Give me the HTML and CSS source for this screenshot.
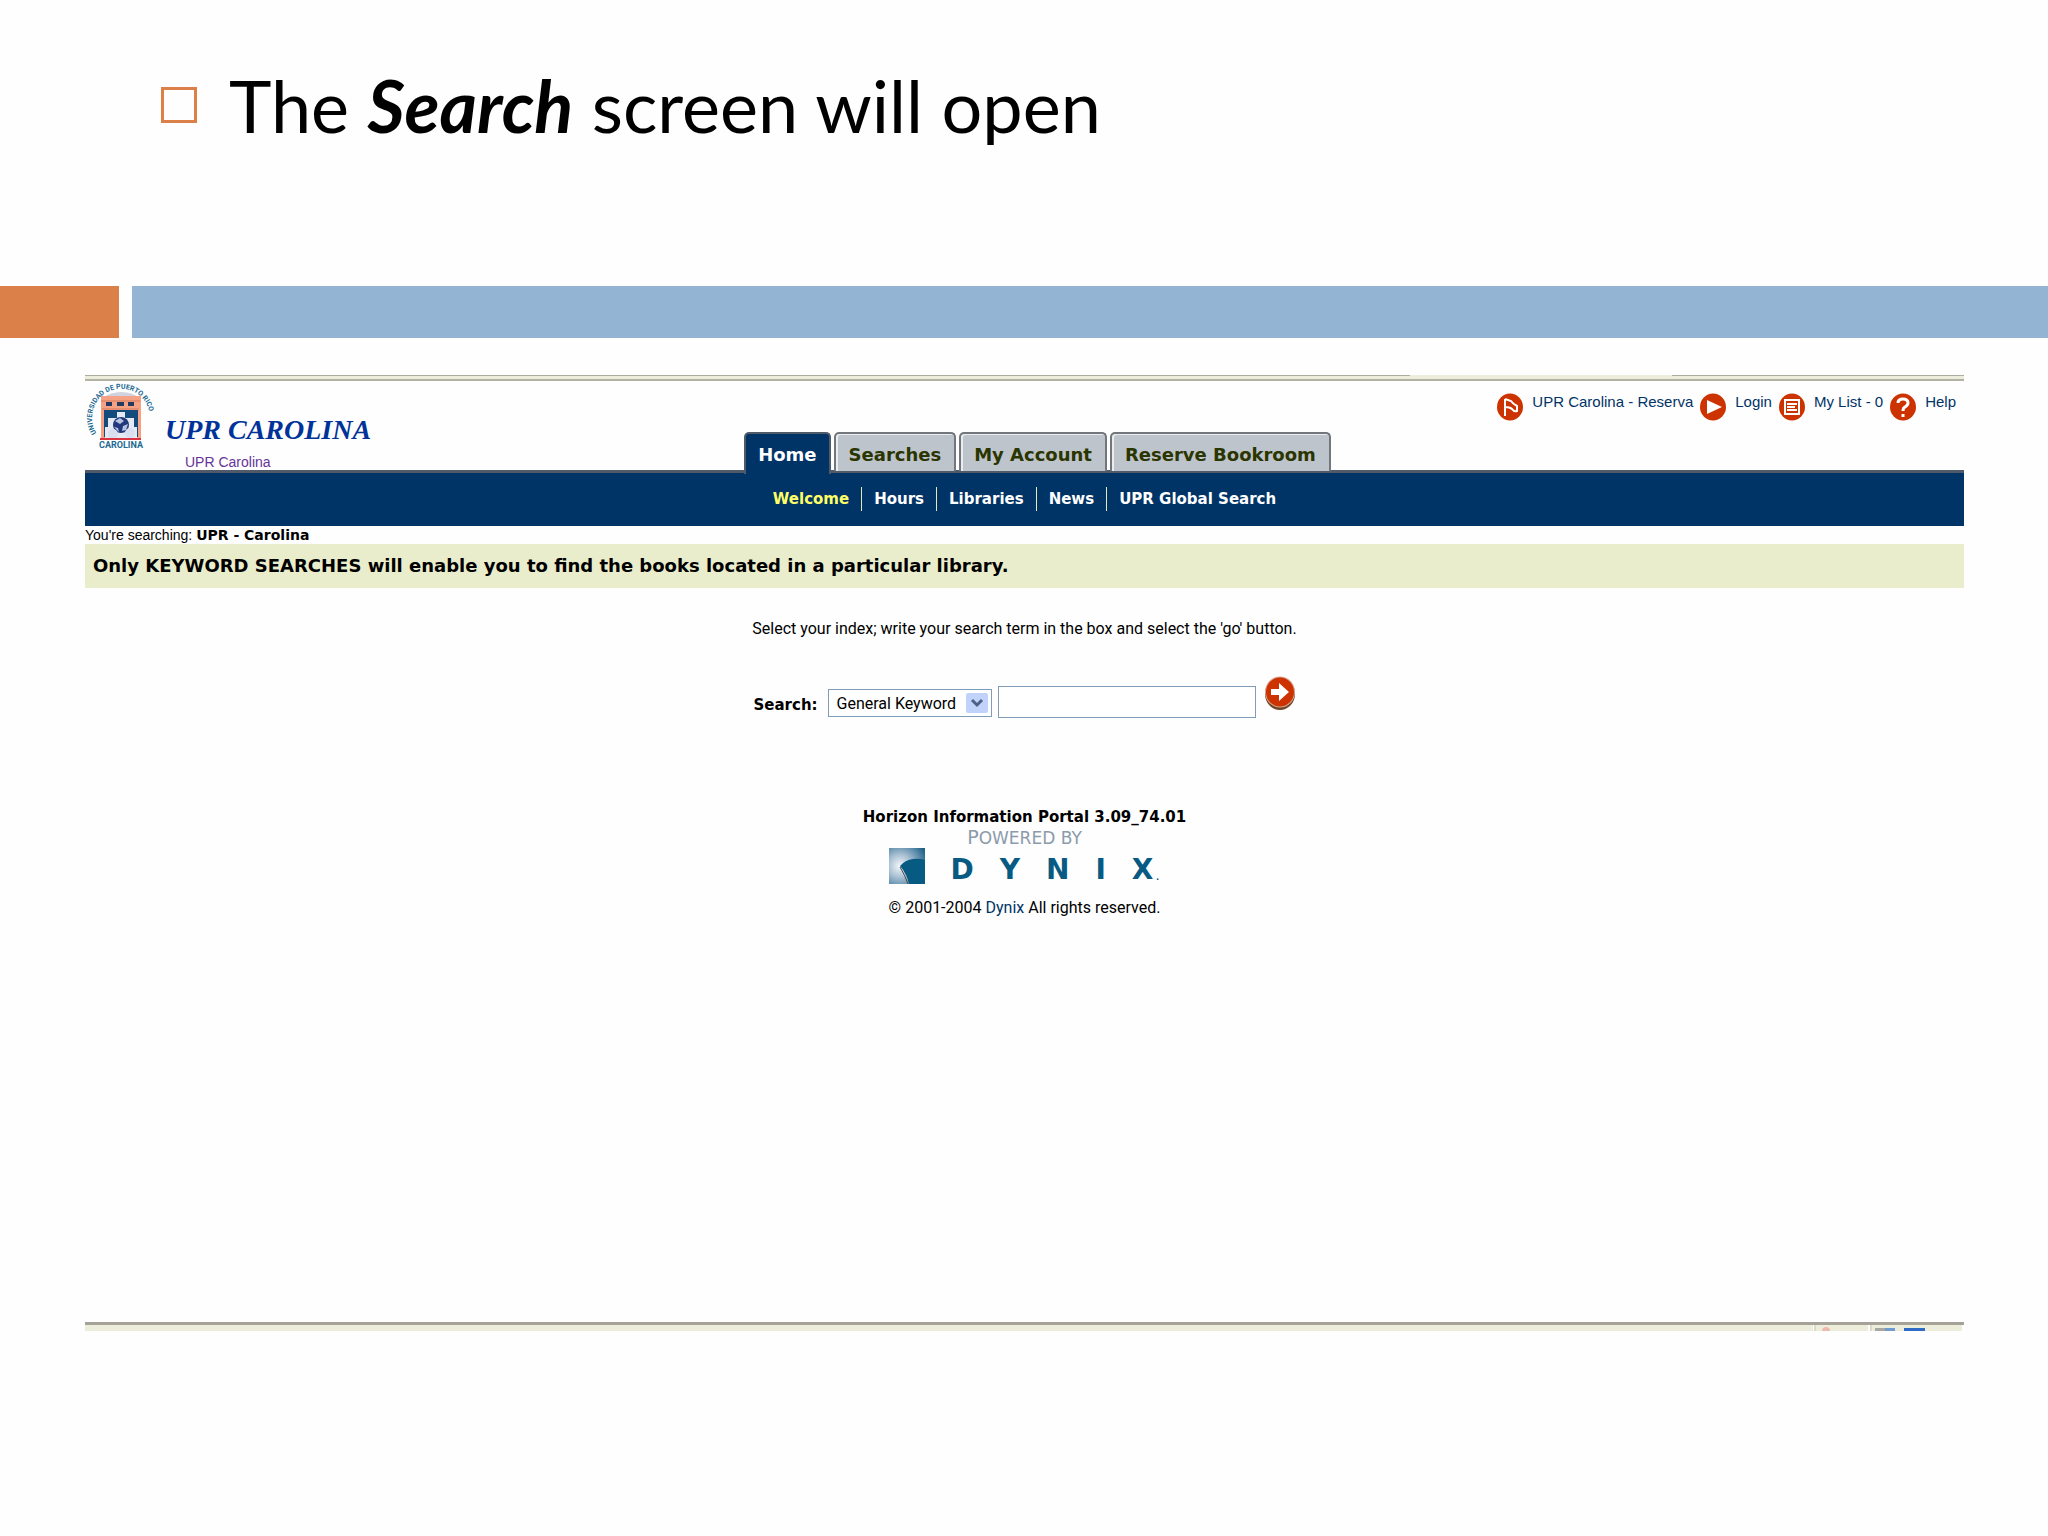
FILE: index.html
```html
<!DOCTYPE html>
<html lang="en">
<head>
<meta charset="utf-8">
<title>UPR Carolina - Search</title>
<link rel="stylesheet" href="styles.css">
</head>
<body>
<header class="slide-title">
  <span class="bullet"></span>
  <h1>The <em>Search</em> screen will open</h1>
</header>
<div class="stripe"><span class="stripe-accent"></span><span class="stripe-main"></span></div>

<main class="portal">
  <div class="frame-top"><span class="frame-gap"></span></div>

  <header class="masthead">
    <div class="brand">
      <svg class="seal" viewBox="0 0 72 70" role="img" aria-label="Universidad de Puerto Rico Carolina">
        <defs><path id="arc" d="M12 53A29 29 0 1 1 60 53"/></defs>
        <text class="seal-arc"><textPath href="#arc" startOffset="1">UNIVERSIDAD DE PUERTO RICO</textPath></text>
        <path d="M17 17Q26 11 36 11Q47 11 55 17Z" fill="#cfd3df"/>
        <path d="M16 15H56V57H16Z" fill="#f4a184"/>
        <path d="M16 20H55M17 28H54" stroke="#d97a5c" stroke-width="1"/>
        <path d="M21 21h6v4h-6zM32 21h7v4h-7zM43 21h6v4h-6z" fill="#233a62"/>
        <path d="M19 29H53V56H19Z" fill="#124b7c"/>
        <path d="M32 31h8v6h9v9h3v11H20V46h3V37h9z" fill="#e4e9f4"/>
        <circle cx="36" cy="44" r="8" fill="#22377c"/>
        <path d="M30 40l5-3 4 3-4 3zM38 45l5-2-2 6-4 1zM29 46l4 1 1 4z" fill="#b6c5df"/>
        <circle cx="28" cy="53" r="5" fill="#d9def0"/><circle cx="45" cy="52" r="5" fill="#d9def0"/>
        <path d="M15 57H56V59H15Z" fill="#dc3340"/>
        <text class="seal-base" x="36" y="67" text-anchor="middle">CAROLINA</text>
      </svg>
      <div class="brand-text">
        <strong class="brand-name">UPR CAROLINA</strong>
        <a class="brand-link" href="#">UPR Carolina</a>
      </div>
    </div>

    <nav class="tabs" aria-label="Sections">
      <a class="tab tab-active" href="#">Home</a>
      <a class="tab" href="#">Searches</a>
      <a class="tab" href="#">My Account</a>
      <a class="tab" href="#">Reserve Bookroom</a>
    </nav>

    <nav class="tools" aria-label="Tools">
      <a href="#"><svg viewBox="0 0 26 28"><ellipse cx="13" cy="14" rx="13" ry="13.500"/><path class="line" d="M8 6V23M8 6L14 8Q16 11 20 13V18Q17 19 15 16Q13 14 8 14"/></svg><span>UPR Carolina - Reserva</span></a>
      <a href="#"><svg viewBox="0 0 26 28"><ellipse cx="13" cy="14" rx="13" ry="13.500"/><path class="solid" d="M7 7L22 14L7 21Z"/></svg><span>Login</span></a>
      <a href="#"><svg viewBox="0 0 26 28"><ellipse cx="13" cy="14" rx="13" ry="13.500"/><path class="line" d="M6 7H20V21H6ZM8 11H18M8 14H16M8 17H18"/></svg><span>My List - 0</span></a>
      <a href="#"><svg viewBox="0 0 26 28"><ellipse cx="13" cy="14" rx="13" ry="13.500"/><path class="bold" d="M8 10Q8 6 13 6Q18 6 18 10Q18 12 15 14Q13 15 13 18M13 21V24"/></svg><span>Help</span></a>
    </nav>
  </header>

  <nav class="subnav" aria-label="Home pages">
    <a class="current" href="#">Welcome</a>
    <a href="#">Hours</a>
    <a href="#">Libraries</a>
    <a href="#">News</a>
    <a href="#">UPR Global Search</a>
  </nav>

  <p class="scope">You're searching: <b>UPR - Carolina</b></p>
  <p class="notice">Only KEYWORD SEARCHES will enable you to find the books located in a particular library.</p>

  <form class="search">
    <p class="hint">Select your index; write your search term in the box and select the 'go' button.</p>
    <div class="search-row">
      <label for="index">Search:</label>
      <div class="select-wrap">
        <select id="index"><option>General Keyword</option></select>
        <svg class="chevron" viewBox="0 0 22 20"><rect width="22" height="20" rx="2"/><path d="M6 7L11 12L16 7"/></svg>
      </div>
      <input class="term" type="text" aria-label="Search term">
      <button class="go" type="button" aria-label="Go">
        <svg viewBox="0 0 32 34"><ellipse cx="16" cy="18" rx="15" ry="16" fill="#6d4527"/><ellipse cx="16" cy="16" rx="15" ry="15.500" fill="#d9a58c"/><ellipse cx="16" cy="16" rx="14" ry="14.500" fill="#cc3300"/><path d="M7 13H15V7L25 16L15 25V19H7Z" fill="#fff"/></svg>
      </button>
    </div>
  </form>

  <footer class="credits">
    <p class="version">Horizon Information Portal 3.09_74.01</p>
    <p class="powered"><span class="cap">P</span>OWERED BY</p>
    <div class="dynix">
      <svg class="dynix-mark" viewBox="0 0 36 36">
        <defs><radialGradient id="glow" cx="0.3" cy="0.5" r="0.8"><stop offset="0" stop-color="#f4f8fb"/><stop offset="0.4" stop-color="#a9c0d3"/><stop offset="1" stop-color="#1f6289"/></radialGradient></defs>
        <path d="M0 0H36V36H0Z" fill="url(#glow)"/>
        <path d="M11 18Q16 12 24 11Q30 10 36 12V36H20Q18 26 11 18Z" fill="#075a82"/>
        <path d="M11 19Q16 27 19 36" fill="none" stroke="#4d4b4d" stroke-width="1"/>
      </svg>
      <span class="wordmark"><span>D</span><span>Y</span><span>N</span><span>I</span><span>X</span></span><span class="mark-dot">.</span>
    </div>
    <p class="rights">© 2001-2004 <a href="#">Dynix</a> All rights reserved.</p>
  </footer>

  <div class="statusbar">
    <svg viewBox="0 0 151 6"><path d="M0 0V6M56 0V6M150 0V6" stroke="#fff" stroke-width="2"/><path d="M2 0V6M58 0V6" stroke="#cbc8b2"/><circle cx="13" cy="6" r="4" fill="#f0b9ae"/><path d="M62 6V3H72V6Z" fill="#a8a8a0"/><path d="M72 6V3H82V6Z" fill="#6f9bd0"/><path d="M91 6V3H112V6Z" fill="#2f6bc6"/></svg>
  </div>
</main>
</body>
</html>
```
FILE: styles.css
```css
* { box-sizing: border-box; }

body {
  margin: 0;
  background: #fefefe;
  color: #000;
  font: 15px/18px "Liberation Sans", Arial, sans-serif;
}

h1, p { margin: 0; }
a { color: inherit; text-decoration: none; }
svg { display: block; }

/* Slide heading */
.slide-title {
  display: flex;
  align-items: flex-start;
  gap: 32px;
  height: 286px;
  padding: 61px 161px 0;
}
.bullet {
  width: 36px;
  height: 36px;
  margin-top: 26px;
  border: 3px solid #db8049;
}
h1 {
  font: 400 72px/88px Lato, "Liberation Sans", sans-serif;
}
h1 em { font-weight: 700; }

.stripe {
  display: flex;
  gap: 13px;
  height: 52px;
}
.stripe-accent { width: 119px; background: #db8049; }
.stripe-main { flex: 1; background: #93b4d3; }

/* Library portal */
.portal { margin: 37px 84px 0 85px; }

.frame-top {
  display: flex;
  height: 6px;
  background: #eceedb;
  border-top: 1px solid #adad9f;
  border-bottom: 2px solid #b3b3a5;
}
.frame-gap {
  width: 262px;
  height: 1px;
  margin: -1px 292px 0 auto;
  background: #eceedb;
}

.masthead {
  display: grid;
  grid-template-columns: 1fr auto 1fr;
  height: 92px;
  border-bottom: 3px solid #505a68;
}

.brand { display: flex; gap: 8px; }
.seal { width: 72px; height: 70px; overflow: visible; }
.seal text { font-family: Roboto, "Liberation Sans", sans-serif; font-weight: 700; fill: #226a94; }
.seal-arc { font-size: 7px; }
.seal-base { font-size: 9px; }
.brand-text { display: flex; flex-direction: column; padding-top: 33px; }
.brand-name {
  color: #039;
  font: italic 700 28px/32px "Liberation Serif", "Times New Roman", serif;
}
.brand-link { padding: 7px 0 0 20px; color: #639; font-size: 14px; }

.tabs {
  display: flex;
  align-items: flex-end;
  gap: 3px;
  padding-left: 26px;
}
.tab {
  height: 39px;
  padding: 0 13px;
  border: 2px solid #73777b;
  border-bottom: 0;
  border-radius: 5px 5px 0 0;
  background: #bdc4cc;
  box-shadow: inset 2px 1px 0 #e9edf0;
  color: #2b3500;
  font: 700 18px/42px "DejaVu Sans", Verdana, sans-serif;
}
.tab-active {
  position: relative;
  height: 42px;
  margin-bottom: -3px;
  padding: 0 12px;
  border-color: #505a68;
  background: #036;
  box-shadow: none;
  color: #fff;
}

.tools {
  display: flex;
  justify-content: flex-end;
  gap: 7px;
  padding: 12px 8px 0 0;
  color: #036;
}
.tools a { display: flex; gap: 9px; }
.tools svg { width: 26px; height: 28px; fill: #c30; }
.tools .line { fill: none; stroke: #fff; stroke-width: 2; }
.tools .bold { fill: none; stroke: #fff; stroke-width: 3; }
.tools .solid { fill: #fff; }

.subnav {
  display: flex;
  justify-content: center;
  height: 53px;
  padding-top: 14px;
  background: #036;
  color: #fff;
  font: 700 15px/24px "DejaVu Sans", Verdana, sans-serif;
}
.subnav a { height: 24px; padding: 0 12px; }
.subnav a + a { border-left: 1px solid #e6ebb4; }
.subnav .current { color: #ff6; }

.scope { height: 18px; font-size: 14px; }
.scope b { font: 700 14px/18px "DejaVu Sans", Verdana, sans-serif; }

.notice {
  padding: 0 8px;
  background: #e9edcb;
  font: 700 18px/44px "DejaVu Sans", Verdana, sans-serif;
}

.search {
  display: flex;
  flex-direction: column;
  align-items: center;
  padding-top: 32px;
}
.hint, .rights { font: 16px/18px Roboto, "Liberation Sans", sans-serif; }
.search-row {
  display: flex;
  align-items: flex-end;
  margin-top: 38px;
}
.search-row label {
  width: 74px;
  font: 700 15px/26px "DejaVu Sans", Verdana, sans-serif;
}
.select-wrap { position: relative; margin: 0 6px 1px 0; }
.select-wrap select {
  width: 164px;
  height: 28px;
  padding: 0 8px;
  appearance: none;
  border: 1px solid #7f9db9;
  border-radius: 0;
  background: #fff;
  color: #000;
  font: 16px Roboto, "Liberation Sans", sans-serif;
}
.chevron {
  position: absolute;
  top: 4px;
  right: 4px;
  width: 22px;
  height: 20px;
  fill: #c2d3fb;
  pointer-events: none;
}
.chevron path { fill: none; stroke: #4d6185; stroke-width: 3; }
.term {
  width: 258px;
  height: 32px;
  border: 1px solid #7f9db9;
  background: #fff;
}
.go {
  align-self: flex-start;
  margin: 0 0 8px 8px;
  padding: 0;
  border: 0;
  background: none;
}
.go svg { width: 32px; height: 34px; }

.credits {
  display: flex;
  flex-direction: column;
  align-items: center;
  padding-top: 89px;
}
.version { font: 700 15px/20px "DejaVu Sans", Verdana, sans-serif; }
.powered {
  height: 20px;
  color: #8b9bab;
  font: 17px/20px "DejaVu Sans", Verdana, sans-serif;
}
.cap { font-size: 19px; }
.dynix {
  display: flex;
  align-items: flex-end;
  height: 37px;
  color: #075a82;
}
.dynix-mark { width: 36px; height: 36px; margin-right: 25px; }
.wordmark {
  display: flex;
  gap: 26px;
  font: 700 28px/28px "DejaVu Sans", Verdana, sans-serif;
}
.mark-dot { margin-left: 2px; }
.rights { margin-top: 15px; }
.rights a { color: #036; }

.statusbar {
  display: flex;
  justify-content: flex-end;
  height: 9px;
  margin-top: 405px;
  border-top: 3px solid #a5a398;
  background: #eceedb;
}
.statusbar svg { width: 151px; height: 6px; }
```
